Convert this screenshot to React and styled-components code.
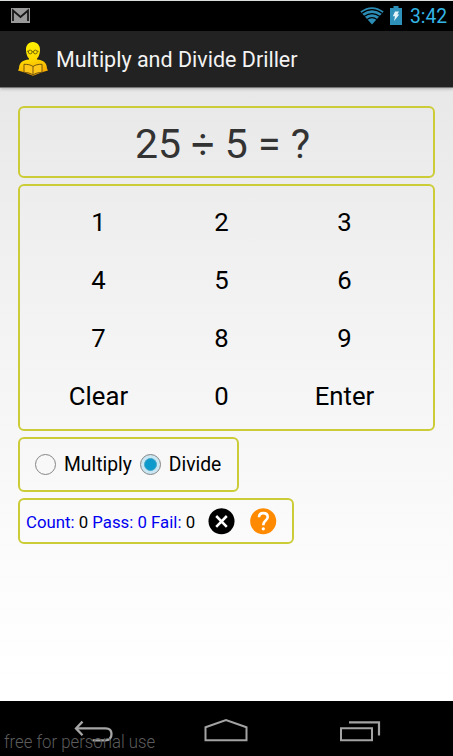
import React, { useState } from "react";
import styled, { createGlobalStyle } from "styled-components";

const GlobalStyle = createGlobalStyle`
  *, *::before, *::after { box-sizing: border-box; }
  body { margin: 0; font-family: Roboto, "Liberation Sans", sans-serif; color: #000; }
  button { font: inherit; color: inherit; background: none; border: 0; padding: 0; }
  svg { display: block; flex: none; }
`;

const Screen = styled.div`
  position: relative;
  display: flex;
  flex-direction: column;
  width: 453px;
  height: 756px;
  overflow: hidden;
  background: linear-gradient(#e8e8e8 87px, #f1f1f1 270px, #fafafa 520px, #fff 680px);
`;

const StatusBar = styled.div`
  display: flex;
  align-items: center;
  height: 31px;
  padding: 0 6px 1px 11px;
  border-top: 1px solid #d9dedb;
  background: #000;
`;

const StatusIcons = styled.div`
  display: flex;
  align-items: center;
  margin-left: auto;
  gap: 6px;
`;

const Clock = styled.span`
  margin: 2px 0 0 2px;
  width: 37px;
  font-size: 19.3px;
  line-height: 28px;
  color: #33b5e5;
  white-space: nowrap;
`;

const ActionBar = styled.header`
  display: flex;
  align-items: center;
  height: 57px;
  padding: 0 0 1px 18px;
  gap: 8px;
  background: #222;
  border-bottom: 1px solid #777;
  box-shadow: 0 1px 3px rgba(0, 0, 0, 0.25);
`;

const Title = styled.h1`
  margin: 1px 0 0;
  font-size: 21.5px;
  font-weight: 400;
  color: #f3f3f3;
  white-space: nowrap;
`;

const Content = styled.main`
  display: flex;
  flex: 1;
  flex-direction: column;
  align-items: flex-start;
  gap: 6px;
  padding: 18px 18px 0;
`;

const Panel = styled.section`
  display: flex;
  align-items: center;
  width: ${(p) => p.$width}px;
  height: ${(p) => p.$height}px;
  border: 2px solid #cccc38;
  border-radius: 6px;
`;

const Problem = styled(Panel)`
  justify-content: center;
  padding: 3px 8px 0 0;
  font-size: 41px;
  color: #333;
  white-space: nowrap;
`;

const Keypad = styled(Panel)`
  display: grid;
  grid-template-columns: repeat(3, 123px);
  grid-template-rows: repeat(4, 58px);
  align-content: start;
  padding: 7px 0 0 17px;
`;

const Key = styled.button`
  font-size: 25.7px;
  line-height: 58px;
  text-align: center;
`;

const Modes = styled(Panel)`
  padding-left: 15px;
  gap: 8px;
`;

const Mode = styled.button`
  display: flex;
  align-items: center;
  gap: 8px;
  font-size: 19.3px;
  line-height: 30px;
`;

const Radio = styled.span`
  display: grid;
  place-items: center;
  width: 21px;
  height: 21px;
  border: 1px solid #858585;
  border-radius: 50%;
  background: ${(p) => (p.$on ? "#c9e7f2" : "transparent")};

  &::after {
    content: "";
    width: 13px;
    height: 13px;
    border-radius: 50%;
    background: ${(p) => (p.$on ? "#0b9acb" : "transparent")};
    border: 1px solid ${(p) => (p.$on ? "#47a5c8" : "transparent")};
  }
`;

const Stats = styled(Panel)`
  padding-left: 6px;
`;

const Score = styled.span`
  width: 182px;
  margin-top: 1px;
  font-size: 16.8px;
  line-height: 24px;
  color: #0000f0;
  white-space: nowrap;
`;

const Value = styled.span`
  color: ${(p) => (p.$blue ? "#0000f0" : "#000")};
`;

const IconButton = styled.button`
  margin-right: 15px;
`;

const NavBar = styled.nav`
  display: grid;
  grid-template-columns: 45px 1fr 45px;
  align-items: start;
  height: 55px;
  padding: 17px 71px 0 70px;
  background: #000;

  & > svg { justify-self: center; }
`;

const Watermark = styled.span`
  position: absolute;
  left: 4px;
  bottom: 3px;
  font-size: 19px;
  font-weight: 300;
  line-height: 22px;
  color: #5c5c5c;
  white-space: nowrap;
  transform: scaleX(0.883);
  transform-origin: left;
`;

function MailIcon() {
  return (
    <svg width="19" height="15" viewBox="0 0 19 15">
      <rect width="19" height="15" fill="#9a9a9a" />
      <path d="M2 13V2.5L9.5 9 17 2.5V13" fill="none" stroke="#181818" strokeWidth="1.8" />
    </svg>
  );
}

function WifiIcon() {
  return (
    <svg width="24" height="19" viewBox="0 0 24 19">
      <path d="M0.3 5.5Q12-3 23.7 5.5L12 18.5Z" fill="#2b8db5" />
      <path d="M1.5 7.4Q12-.1 22.5 7.4M4 10.6Q12 4.6 20 10.6M6.8 13.6Q12 9.5 17.2 13.6" fill="none" stroke="#000" strokeWidth="1.2" />
    </svg>
  );
}

function BatteryIcon() {
  return (
    <svg width="12" height="19" viewBox="0 0 12 19">
      <path d="M3.5 0h5v2H12v17H0V2h3.5z" fill="#2e91b9" />
      <path d="M5 5.5h4L7.4 8.6H9.3L4 15l1-4.7H2.8z" fill="#e5f4f9" />
    </svg>
  );
}

function ReaderIcon() {
  return (
    <svg width="30" height="34" viewBox="0 0 30 34">
      <defs>
        <linearGradient id="gold" x1="0" y1="0" x2="0.2" y2="1">
          <stop offset="0" stopColor="#fff500" />
          <stop offset="0.55" stopColor="#ffdc00" />
          <stop offset="1" stopColor="#f6a900" />
        </linearGradient>
      </defs>
      <path d="M14.8 0C10.2 0 7.7 3.6 8 8.4c.2 3.4 1.3 6.4 3 8.2v1C5.2 18.5 1.2 20 1 26.5L0 28.5l6 1.7 9 3.6 9-3.6 6-1.7-1-2c-.2-6.5-4.2-8-10-8.9v-1c1.7-1.8 2.8-4.8 3-8.2C22.3 3.6 19.5 0 14.8 0Z" fill="url(#gold)" />
      <path d="M6 22.3c4-.1 6.6.6 9 2.2 2.4-1.6 5-2.3 9-2.2v8c-4 .2-6.6 1-9 2.7-2.4-1.7-5-2.5-9-2.7zM15 24.5V33" fill="#ffc71a" stroke="#6b4d0b" strokeWidth=".9" />
      <g fill="none" stroke="#6c6000" strokeWidth=".9">
        <circle cx="12.2" cy="10" r="1.9" />
        <circle cx="17.4" cy="10" r="1.9" />
        <path d="M14.1 9.7h1.4M9 9.2h1.4M19.2 9.2h1.4" />
      </g>
    </svg>
  );
}

function ClearIcon() {
  return (
    <svg width="27" height="27" viewBox="0 0 27 27">
      <circle cx="13.5" cy="13.3" r="13" fill="#000" />
      <path d="M8.2 8l10.6 10.8M18.8 8L8.2 18.8" stroke="#fff" strokeWidth="2.5" />
    </svg>
  );
}

function HelpIcon() {
  return (
    <svg width="27" height="27" viewBox="0 0 27 27">
      <circle cx="13.2" cy="13.3" r="13" fill="#ff8a00" />
      <path d="M9 9.2c.1-2.8 1.8-4.1 4.3-4.1 2.7 0 4.4 1.4 4.4 3.9 0 3.4-4.3 3.6-4.3 7.5v.8" fill="none" stroke="#fff" strokeWidth="2.6" />
      <circle cx="13.3" cy="20.8" r="1.6" fill="#fff" />
    </svg>
  );
}

function BackIcon() {
  return (
    <svg width="40" height="25" viewBox="0 0 40 25">
      <path d="M3 10.4H32.5C36 10.4 38.5 12.4 38.5 16 38.5 20 36 22.3 32 22.3H19.5" fill="none" stroke="#a6a6a6" strokeWidth="2.3" />
      <path d="M9.5 3.6L3 10.4l6.5 6.8" fill="none" stroke="#a6a6a6" strokeWidth="2.3" />
    </svg>
  );
}

function HomeIcon() {
  return (
    <svg width="44" height="25" viewBox="0 0 44 25">
      <path d="M1.5 22.3V9.3L22 2 42.5 9.3V22.3Z" fill="none" stroke="#a3a3a3" strokeWidth="2" />
    </svg>
  );
}

function RecentsIcon() {
  return (
    <svg width="42" height="25" viewBox="0 0 42 25">
      <path d="M2 10.2H33V22.3H2Z" fill="none" stroke="#a3a3a3" strokeWidth="2" />
      <path d="M10 4.3H40V17.5" fill="none" stroke="#a3a3a3" strokeWidth="2.2" />
    </svg>
  );
}

const keys = ["1", "2", "3", "4", "5", "6", "7", "8", "9", "Clear", "0", "Enter"];

export default function App() {
  const [mode, setMode] = useState("Divide");

  return (
    <Screen>
      <GlobalStyle />
      <StatusBar>
        <MailIcon />
        <StatusIcons>
          <WifiIcon />
          <BatteryIcon />
          <Clock>3:42</Clock>
        </StatusIcons>
      </StatusBar>
      <ActionBar>
        <ReaderIcon />
        <Title>Multiply and Divide Driller</Title>
      </ActionBar>
      <Content>
        <Problem $width={417} $height={72}>25 ÷ 5 = ?</Problem>
        <Keypad $width={417} $height={247}>
          {keys.map((k) => <Key key={k}>{k}</Key>)}
        </Keypad>
        <Modes $width={221} $height={55}>
          {["Multiply", "Divide"].map((m) => (
            <Mode key={m} onClick={() => setMode(m)}>
              <Radio $on={m === mode} />
              {m}
            </Mode>
          ))}
        </Modes>
        <Stats $width={276} $height={46}>
          <Score>
            Count: <Value>0</Value> Pass: <Value $blue>0</Value> Fail: <Value>0</Value>
          </Score>
          <IconButton aria-label="Reset"><ClearIcon /></IconButton>
          <IconButton aria-label="Help"><HelpIcon /></IconButton>
        </Stats>
      </Content>
      <NavBar>
        <BackIcon />
        <HomeIcon />
        <RecentsIcon />
      </NavBar>
      <Watermark>free for personal use</Watermark>
    </Screen>
  );
}
